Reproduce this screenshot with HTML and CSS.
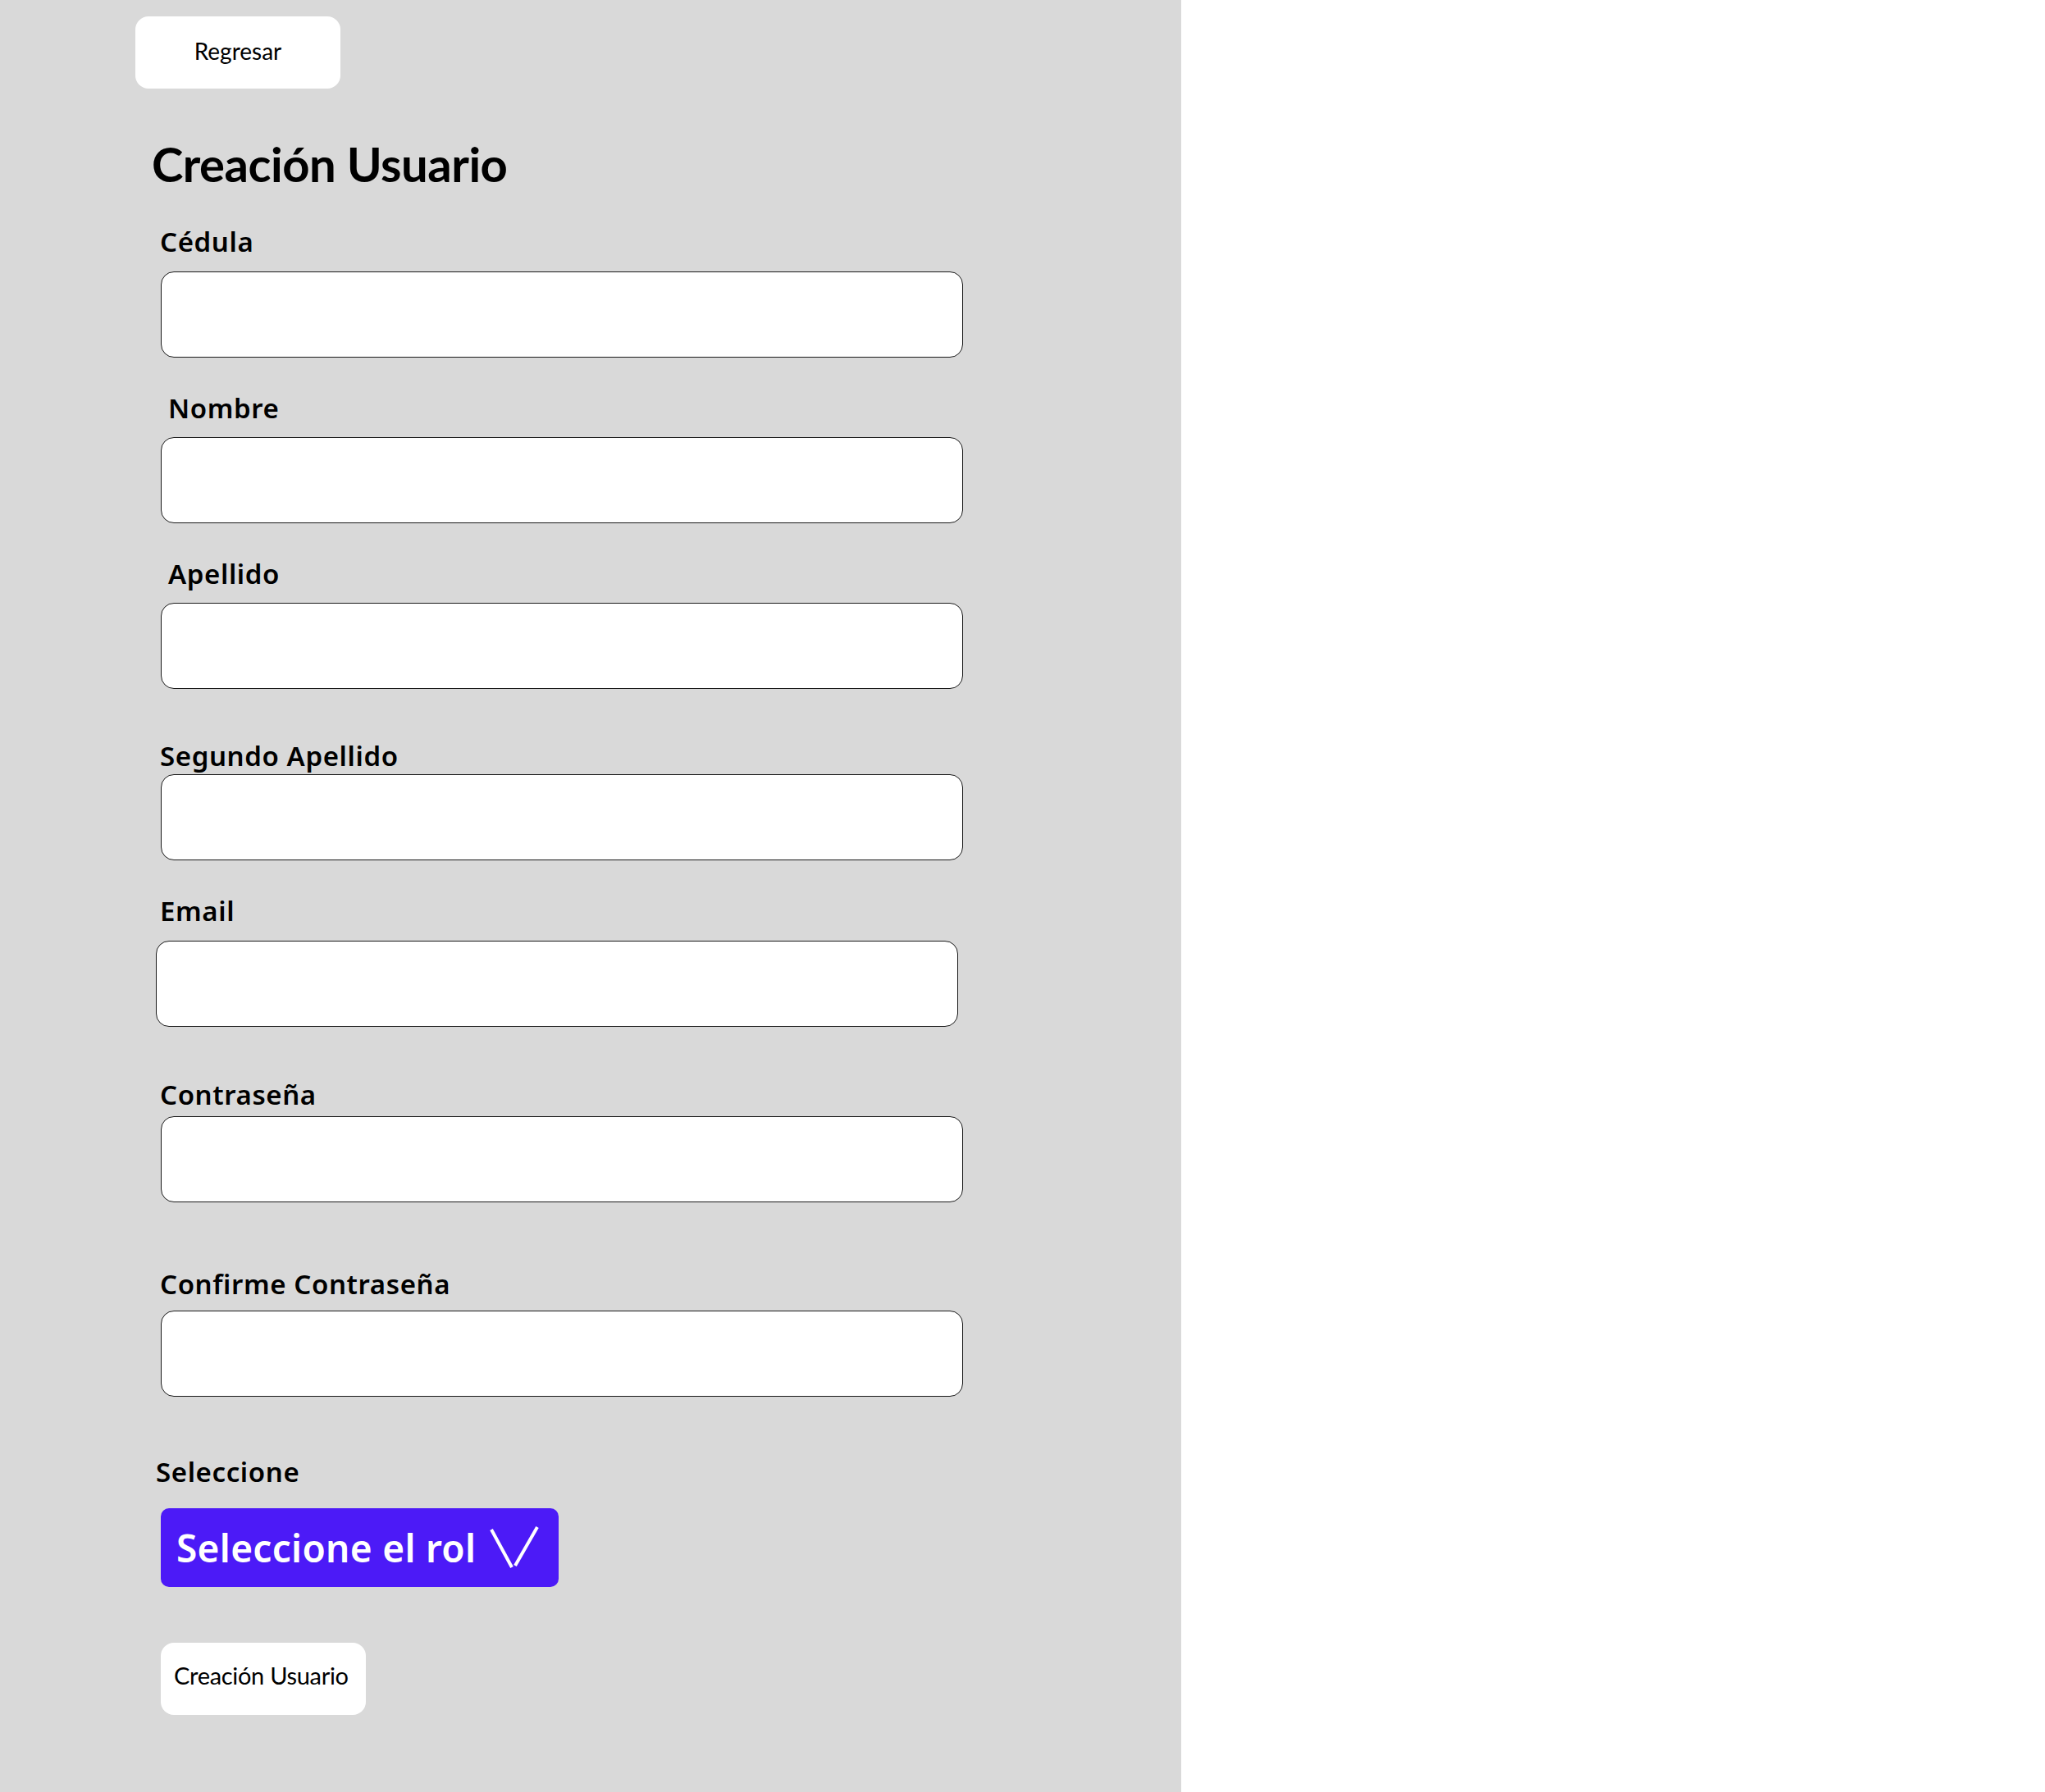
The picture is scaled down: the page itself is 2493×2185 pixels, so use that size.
FILE: index.html
```html
<!DOCTYPE html>
<html lang="es">
<head>
<meta charset="utf-8">
<title>Creación Usuario</title>
<link rel="stylesheet" href="styles.css">
</head>
<body>
<div class="page">
  <main class="panel">
    <button class="btn-back" type="button">Regresar</button>
    <h1 class="title">Creación Usuario</h1>
    <form class="form">
      <div class="field f-cedula">
        <label class="label">Cédula</label>
        <input class="input" type="text">
      </div>
      <div class="field f-nombre">
        <label class="label label-indent">Nombre</label>
        <input class="input" type="text">
      </div>
      <div class="field f-apellido">
        <label class="label label-indent">Apellido</label>
        <input class="input" type="text">
      </div>
      <div class="field f-segundo">
        <label class="label">Segundo Apellido</label>
        <input class="input" type="text">
      </div>
      <div class="field f-email">
        <label class="label">Email</label>
        <input class="input input-shift" type="email">
      </div>
      <div class="field f-pass">
        <label class="label">Contraseña</label>
        <input class="input" type="password">
      </div>
      <div class="field f-confirm">
        <label class="label">Confirme Contraseña</label>
        <input class="input" type="password">
      </div>
      <div class="field f-rol">
        <label class="label label-out">Seleccione</label>
        <button class="select-rol" type="button">
          <span class="select-text">Seleccione el rol</span>
          <svg class="chevron" width="60" height="54" viewBox="0 0 60 54" aria-hidden="true">
            <line x1="2" y1="5" x2="27" y2="51" stroke="#fff" stroke-width="4"/>
            <line x1="58" y1="2" x2="31" y2="49" stroke="#fff" stroke-width="4"/>
          </svg>
        </button>
      </div>
      <button class="btn-create" type="button">Creación Usuario</button>
    </form>
  </main>
  <aside class="blank"></aside>
</div>
</body>
</html>
```

FILE: styles.css
```css
html, body {
  margin: 0;
  padding: 0;
  background: #ffffff;
}

.page {
  display: flex;
  min-height: 2185px;
}

.panel {
  width: 1440px;
  min-height: 2185px;
  background: #d9d9d9;
  display: flex;
  flex-direction: column;
  align-items: flex-start;
  box-sizing: border-box;
  padding-top: 20px;
}

.blank {
  flex: 1;
  background: #ffffff;
}

.btn-back {
  margin-left: 165px;
  width: 250px;
  height: 88px;
  border: none;
  border-radius: 16px;
  background: #ffffff;
  font-family: Lato, "Liberation Sans", sans-serif;
  font-size: 28px;
  color: #000;
  padding: 0 0 5px 0;
  cursor: pointer;
}

.title {
  margin: 57px 0 0 185px;
  font-family: Lato, "Liberation Sans", sans-serif;
  font-weight: 700;
  font-size: 58px;
  line-height: 70px;
  letter-spacing: -0.5px;
  color: #000;
}

.form {
  display: flex;
  flex-direction: column;
  align-items: flex-start;
  padding-left: 196px;
  margin-top: 40px;
}

.field {
  display: flex;
  flex-direction: column;
  align-items: flex-start;
}

.label {
  display: block;
  font-family: "Noto Sans", "Open Sans", sans-serif;
  font-weight: 600;
  font-size: 33px;
  line-height: 40px;
  height: 40px;
  letter-spacing: 0.6px;
  color: #000;
  margin-left: -1px;
}

.label-indent { margin-left: 9px; }
.label-out { margin-left: -6px; }

.input {
  display: block;
  box-sizing: border-box;
  width: 978px;
  height: 105px;
  background: #ffffff;
  border: 1px solid #1a1a1a;
  border-radius: 16px;
  padding: 0 20px;
  font-size: 28px;
  font-family: "Noto Sans", sans-serif;
  outline: none;
}

.input-shift { margin-left: -6px; }

.f-cedula .input { margin-top: 16px; }
.f-nombre { margin-top: 42px; }
.f-nombre .input { margin-top: 15px; }
.f-apellido { margin-top: 42px; }
.f-apellido .input { margin-top: 15px; }
.f-segundo { margin-top: 62px; }
.f-segundo .input { margin-top: 2px; }
.f-email { margin-top: 42px; }
.f-email .input { margin-top: 16px; }
.f-pass { margin-top: 63px; }
.f-pass .input { margin-top: 6px; }
.f-confirm { margin-top: 80px; }
.f-confirm .input { margin-top: 12px; }
.f-rol { margin-top: 72px; }

.select-rol {
  margin-top: 24px;
  width: 485px;
  height: 96px;
  box-sizing: border-box;
  border: none;
  border-radius: 10px;
  background: #4c1af7;
  display: flex;
  align-items: center;
  gap: 17px;
  padding: 0 0 0 19px;
  color: #ffffff;
  cursor: pointer;
}

.select-text {
  font-family: "Noto Sans", "Open Sans", sans-serif;
  font-weight: 600;
  font-size: 46px;
  line-height: 56px;
  letter-spacing: 0.3px;
  white-space: nowrap;
}

.chevron {
  display: block;
  flex: none;
}

.btn-create {
  margin-top: 68px;
  width: 250px;
  height: 88px;
  border: none;
  border-radius: 16px;
  background: #ffffff;
  font-family: Lato, "Liberation Sans", sans-serif;
  font-size: 29px;
  letter-spacing: -0.3px;
  color: #000;
  text-align: left;
  padding: 0 0 10px 16px;
  white-space: nowrap;
  cursor: pointer;
}
```
